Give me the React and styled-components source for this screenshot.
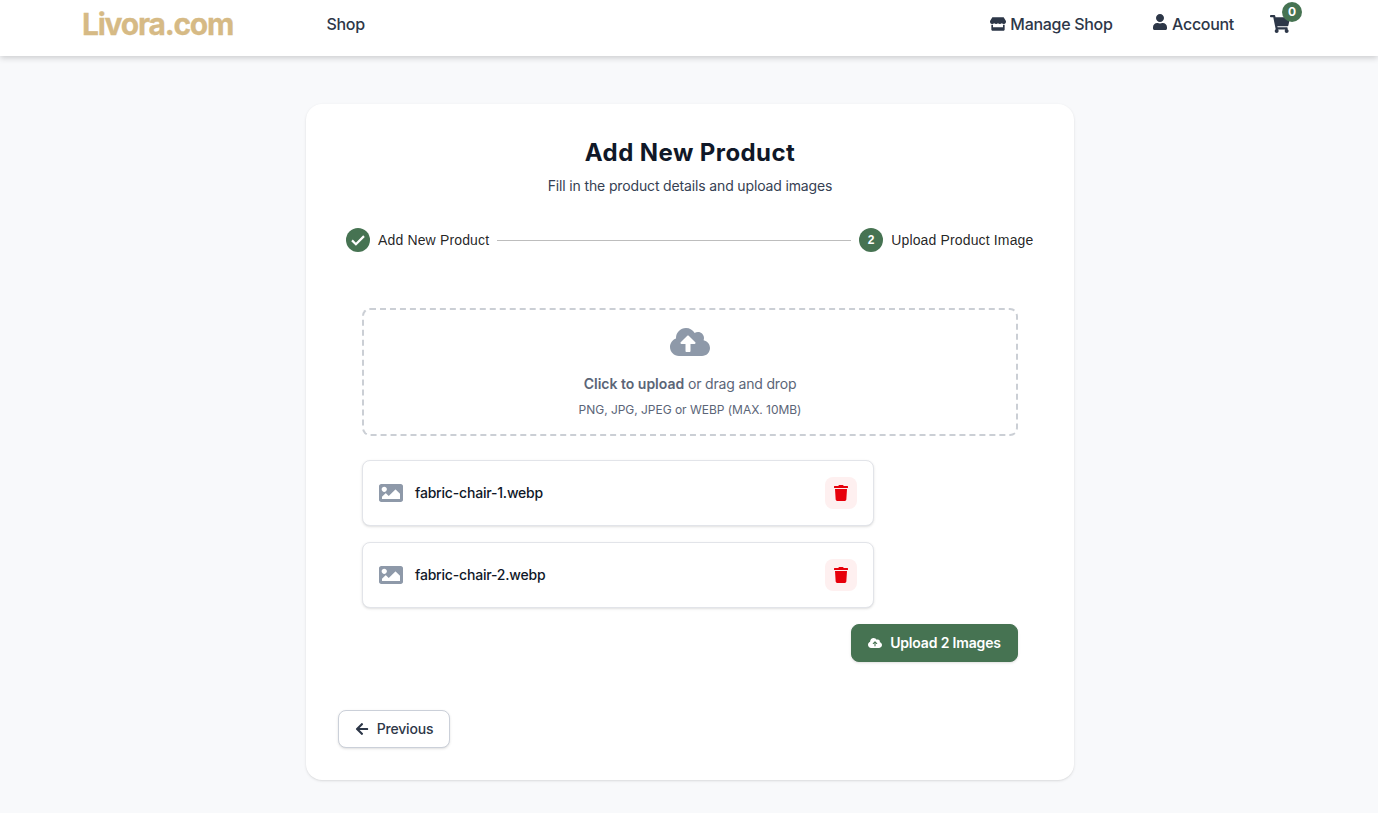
import React from "react";
import styled, { createGlobalStyle } from "styled-components";
import {
  FaArrowLeft,
  FaCloudUploadAlt,
  FaImage,
  FaShoppingCart,
  FaStore,
  FaTrash,
  FaUser,
} from "react-icons/fa";
import { FaCloudArrowUp } from "react-icons/fa6";

const GlobalStyle = createGlobalStyle`
  *, *::before, *::after { box-sizing: border-box; }
  body {
    margin: 0;
    background: #f8f9fb;
    font-family: Inter, "Liberation Sans", sans-serif;
    color: #101828;
    -webkit-font-smoothing: antialiased;
  }
  svg { display: block; flex: none; }
  button { font-family: inherit; cursor: pointer; }
  h1, p { margin: 0; }
`;

const Page = styled.div`
  min-height: 813px;
  overflow: hidden;
`;

const Header = styled.header`
  display: flex;
  align-items: center;
  height: 56px;
  padding: 0 76px 8px 82px;
  background: #fff;
  box-shadow: 0 2px 6px rgba(0, 0, 0, 0.18);
`;

const Brand = styled.a`
  width: 244.5px;
  color: #d6ba85;
  font-size: 30px;
  font-weight: 700;
  line-height: 36px;
  letter-spacing: -1.25px;
  -webkit-text-stroke: 0.3px currentColor;
`;

const NavLink = styled.a`
  display: flex;
  align-items: center;
  gap: 4px;
  color: #2d3748;
  font-size: 16px;
  font-weight: 500;
  line-height: 24px;
  letter-spacing: -0.3px;
  svg { margin-top: ${(p) => p.$lift || 0}px; }
`;

const NavActions = styled.nav`
  display: flex;
  align-items: center;
  gap: 39.5px;
  margin-left: auto;
`;

const Cart = styled.a`
  position: relative;
  display: flex;
  width: 32px;
  margin-left: -3.5px;
  color: #2d3748;
`;

const CartCount = styled.span`
  position: absolute;
  top: -12px;
  left: 12px;
  width: 20px;
  height: 20px;
  border-radius: 50%;
  background: #467352;
  color: #fff;
  font-size: 12px;
  font-weight: 700;
  line-height: 20px;
  text-align: center;
`;

const Card = styled.main`
  width: 768px;
  height: 676px;
  margin: 48px auto 0 306px;
  padding: 32px;
  border-radius: 16px;
  background: #fff;
  box-shadow: 0 1px 3px rgba(0, 0, 0, 0.1), 0 1px 2px -1px rgba(0, 0, 0, 0.1);
`;

const Title = styled.h1`
  padding-top: 1px;
  font-size: 24px;
  font-weight: 700;
  line-height: 32px;
  letter-spacing: 0.42px;
  text-align: center;
`;

const Subtitle = styled.p`
  margin-top: 7px;
  color: #364153;
  font-size: 14px;
  line-height: 20px;
  letter-spacing: -0.145px;
  text-align: center;
`;

const Stepper = styled.div`
  display: flex;
  align-items: center;
  gap: 8px;
  margin-top: 32px;
  padding: 0 8.5px 0 8px;
`;

const Step = styled.div`
  display: flex;
  align-items: center;
  gap: 8px;
  color: rgba(0, 0, 0, 0.87);
  font-family: "Liberation Sans", Arial, sans-serif;
  font-size: 14px;
  line-height: 20px;
  letter-spacing: 0.15px;
`;

const StepBadge = styled.span`
  display: grid;
  place-items: center;
  width: 24px;
  height: 24px;
  border-radius: 50%;
  background: #467352;
  color: #fff;
  font-size: 12px;
  font-weight: 700;
  letter-spacing: 0;
`;

const Connector = styled.div`
  flex: 1;
  border-top: 1px solid #bdbdbd;
`;

const UploadPanel = styled.section`
  display: flex;
  flex-direction: column;
  gap: 16px;
  margin: 56px 24px 0;
`;

const DropZone = styled.label`
  display: flex;
  flex-direction: column;
  align-items: center;
  height: 128px;
  margin-bottom: 8px;
  padding-top: 12px;
  border: 2px dashed #cbcfd5;
  border-radius: 8px;
  color: #8e99a9;
`;

const DropText = styled.p`
  margin-top: 12px;
  color: #5b6577;
  font-size: 14px;
  line-height: 20px;
  letter-spacing: -0.17px;
  strong {
    font-weight: 600;
    letter-spacing: 0;
  }
`;

const DropHint = styled.p`
  margin-top: 8px;
  color: #5b6577;
  font-size: 12px;
  line-height: 16px;
  letter-spacing: -0.03px;
`;

const FileRow = styled.div`
  display: flex;
  align-items: center;
  gap: 12px;
  width: 512px;
  height: 66px;
  padding: 0 16px;
  border: 1px solid #e2e4e9;
  border-radius: 8px;
  background: #fff;
  box-shadow: 0 1px 3px rgba(0, 0, 0, 0.1), 0 1px 2px -1px rgba(0, 0, 0, 0.1);
  color: #8e99a9;
`;

const FileName = styled.span`
  flex: 1;
  color: #101828;
  font-size: 14px;
  font-weight: 500;
  line-height: 20px;
  letter-spacing: -0.19px;
`;

const DeleteButton = styled.button`
  display: grid;
  place-items: center;
  width: 32px;
  height: 32px;
  padding: 0;
  border: 0;
  border-radius: 8px;
  background: #fef0f0;
  color: #e7000b;
`;

const ActionButton = styled.button`
  display: flex;
  align-items: center;
  justify-content: center;
  gap: 8px;
  width: ${(p) => (p.$primary ? 167 : 112)}px;
  height: 38px;
  padding: 0;
  border: 1px solid ${(p) => (p.$primary ? "#467352" : "#cbd0d9")};
  border-radius: 8px;
  background: ${(p) => (p.$primary ? "#467352" : "#fff")};
  box-shadow: 0 1px 3px rgba(0, 0, 0, 0.1), 0 1px 2px -1px rgba(0, 0, 0, 0.1);
  color: ${(p) => (p.$primary ? "#fff" : "#2d3748")};
  font-size: 14px;
  font-weight: ${(p) => (p.$primary ? 600 : 500)};
  line-height: 20px;
  letter-spacing: -0.17px;
`;

const UploadActions = styled.div`
  display: flex;
  justify-content: flex-end;
`;

const Footer = styled.footer`
  display: flex;
  margin-top: 48px;
`;

const files = ["fabric-chair-1.webp", "fabric-chair-2.webp"];

export default function App() {
  return (
    <Page>
      <GlobalStyle />
      <Header>
        <Brand>Livora.com</Brand>
        <NavLink>Shop</NavLink>
        <NavActions>
          <NavLink><FaStore size={16} />Manage Shop</NavLink>
          <NavLink $lift={-4}><FaUser size={16} />Account</NavLink>
          <Cart>
            <FaShoppingCart size={20} />
            <CartCount>0</CartCount>
          </Cart>
        </NavActions>
      </Header>
      <Card>
        <Title>Add New Product</Title>
        <Subtitle>Fill in the product details and upload images</Subtitle>
        <Stepper>
          <Step>
            <StepBadge>
              <svg width="14" height="11" viewBox="0 0 14 11" fill="none" stroke="#fff" strokeWidth="2.2">
                <path d="M1 5.4 4.9 9.2 13 1.1" />
              </svg>
            </StepBadge>
            Add New Product
          </Step>
          <Connector />
          <Step><StepBadge>2</StepBadge>Upload Product Image</Step>
        </Stepper>
        <UploadPanel>
          <DropZone>
            <FaCloudUploadAlt size={40} />
            <DropText><strong>Click to upload</strong> or drag and drop</DropText>
            <DropHint>PNG, JPG, JPEG or WEBP (MAX. 10MB)</DropHint>
          </DropZone>
          {files.map((name) => (
            <FileRow key={name}>
              <FaImage size={24} />
              <FileName>{name}</FileName>
              <DeleteButton aria-label={`Remove ${name}`}><FaTrash size={16} /></DeleteButton>
            </FileRow>
          ))}
          <UploadActions>
            <ActionButton $primary><FaCloudArrowUp size={14} />Upload {files.length} Images</ActionButton>
          </UploadActions>
        </UploadPanel>
        <Footer>
          <ActionButton><FaArrowLeft size={14} />Previous</ActionButton>
        </Footer>
      </Card>
    </Page>
  );
}
